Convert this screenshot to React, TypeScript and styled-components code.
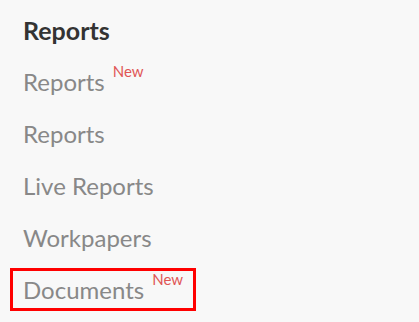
import styled, { createGlobalStyle } from "styled-components";

const items = [
    { id: 1, label: "Reports", isNew: true, active: false },
    { id: 2, label: "Reports", isNew: false, active: false },
    { id: 3, label: "Live Reports", isNew: false, active: false },
    { id: 4, label: "Workpapers", isNew: false, active: false },
    { id: 5, label: "Documents", isNew: true, active: true },
];

const GlobalStyle = createGlobalStyle`
    body {
        margin: 0;
        background: #f8f8f8;
        font-family: Lato, "Liberation Sans", sans-serif;
    }
`;

const Sidebar = styled.nav`
    display: flex;
    flex-direction: column;
    align-items: flex-start;
    padding: 15px 0 0 10px;
`;

const Heading = styled.h2`
    margin: 0 0 15px 13px;
    font-size: 25px;
    line-height: 30px;
    font-weight: 700;
    color: #333333;
`;

const ItemList = styled.div`
    display: flex;
    flex-direction: column;
    align-items: flex-start;
    gap: 9px;
`;

const NavItem = styled.a<{ $active: boolean }>`
    display: inline-block;
    padding: 0 10px 0 10px;
    border: 3px solid ${(p) => (p.$active ? "#ff0000" : "transparent")};
    font-size: 24px;
    line-height: 37px;
    color: #888888;
    text-decoration: none;
    white-space: nowrap;
`;

const NewTag = styled.span`
    margin-left: 8px;
    font-size: 15px;
    line-height: 15px;
    vertical-align: 14px;
    color: #e05555;
`;

export default function App() {
    return (
        <>
            <GlobalStyle />
            <Sidebar>
                <Heading>Reports</Heading>
                <ItemList>
                    {items.map((item) => (
                        <NavItem key={item.id} href="#" $active={item.active}>
                            {item.label}
                            {item.isNew && <NewTag>New</NewTag>}
                        </NavItem>
                    ))}
                </ItemList>
            </Sidebar>
        </>
    );
}
